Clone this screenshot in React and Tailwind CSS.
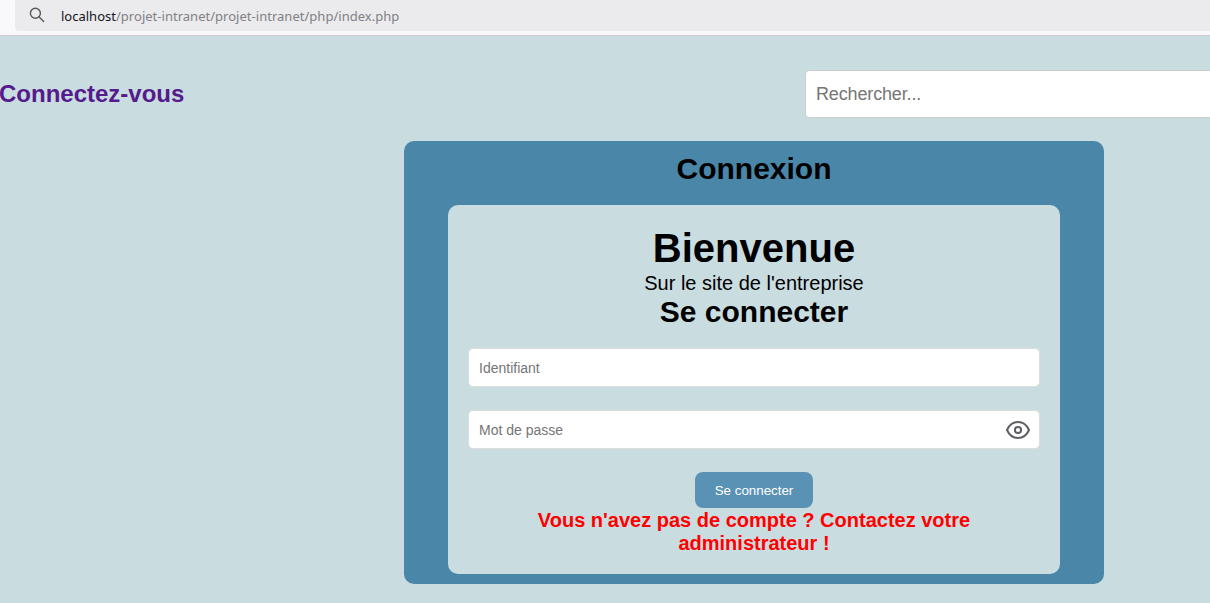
const FONT = "font-['Liberation_Sans',Arial,sans-serif]";

function AddressBar() {
  return (
    <div className="flex h-9 shrink-0 items-start border-b border-[#cccccc] bg-[#f9f9fb] pl-[15px]">
      <div className="flex h-[31px] grow items-center rounded-bl bg-[#ebebed] pl-[14px]">
        <svg className="mb-px h-4 w-4 shrink-0" viewBox="0 0 16 16" fill="none" stroke="#55555d" strokeWidth="1.4" strokeLinecap="round">
          <circle cx="6.4" cy="6.2" r="5" />
          <path d="M10 9.8 14.600 14.400" />
        </svg>
        <div className="mt-px ml-4 flex whitespace-pre font-['Noto_Sans',sans-serif] text-[13px] leading-[20px] text-[#808085]">
          <span className="w-[55px] text-[#15141a]">localhost</span>
          <span className="tracking-[0.02px]">/projet-intranet/projet-intranet/php/index.php</span>
        </div>
      </div>
    </div>
  );
}

function EyeIcon() {
  return (
    <svg className="h-6 w-6 shrink-0" viewBox="0 0 24 24" fill="none" stroke="#5f5f63" strokeWidth="2">
      <path d="M1 12C3.200 7 7.100 4 12 4s8.800 3 11 8c-2.200 5-6.100 8-11 8S3.200 17 1 12Z" strokeLinejoin="round" />
      <circle cx="12" cy="12" r="3.100" />
    </svg>
  );
}

function Field({ type, placeholder, children }) {
  return (
    <label className="flex h-[38.67px] items-center rounded-[5px] border border-[#dddddd] bg-white pl-[10px] pr-[9px] pt-[1.5px]">
      <input
        type={type}
        placeholder={placeholder}
        className="min-w-0 grow bg-transparent text-sm outline-none placeholder:text-[#757575]"
      />
      {children}
    </label>
  );
}

export default function App() {
  return (
    <div className={`flex h-[603px] w-full flex-col overflow-hidden bg-[#c9dce0] text-black ${FONT}`}>
      <AddressBar />
      <header className="mt-[34px] flex h-12 shrink-0 items-center">
        <a href="#connexion" className="-ml-px w-[806px] shrink-0 text-2xl font-bold text-[#551a8b]">Connectez-vous</a>
        <input
          type="text"
          placeholder="Rechercher..."
          className="h-12 w-[500px] shrink-0 rounded-[4px] border border-[#cccccc] bg-white px-[10px] text-[18px] tracking-[-0.15px] outline-none placeholder:text-[#757575]"
        />
      </header>
      <main id="connexion" className="ml-[404px] mt-[23px] flex h-[443px] w-[700px] shrink-0 flex-col items-center rounded-[10px] bg-[#4a86a8] pt-[11px]">
        <h1 className="text-[30px] font-bold leading-[34px]">Connexion</h1>
        <section className="mt-[19px] flex h-[369px] w-[612px] flex-col rounded-[10px] bg-[#c9dce0] px-5 pt-5 text-center">
          <h2 className="text-[40px] font-bold leading-[47px]">Bienvenue</h2>
          <p className="text-xl leading-[23px]">Sur le site de l'entreprise</p>
          <h3 className="text-[30px] font-bold leading-[34px]">Se connecter</h3>
          <form className="mt-[19px] flex flex-col">
            <Field type="text" placeholder="Identifiant" />
            <div className="mt-[23.33px] flex flex-col">
              <Field type="password" placeholder="Mot de passe">
                <EyeIcon />
              </Field>
            </div>
            <button type="button" className="mt-[23.33px] h-9 w-[118px] self-center rounded-lg bg-[#5a92b5] pt-0.5 text-[13.333px] text-white">
              Se connecter
            </button>
          </form>
          <p className="mt-px w-[460px] self-center text-xl font-bold leading-[23px] text-[#ff0000]">
            Vous n'avez pas de compte ? Contactez votre administrateur !
          </p>
        </section>
      </main>
    </div>
  );
}
